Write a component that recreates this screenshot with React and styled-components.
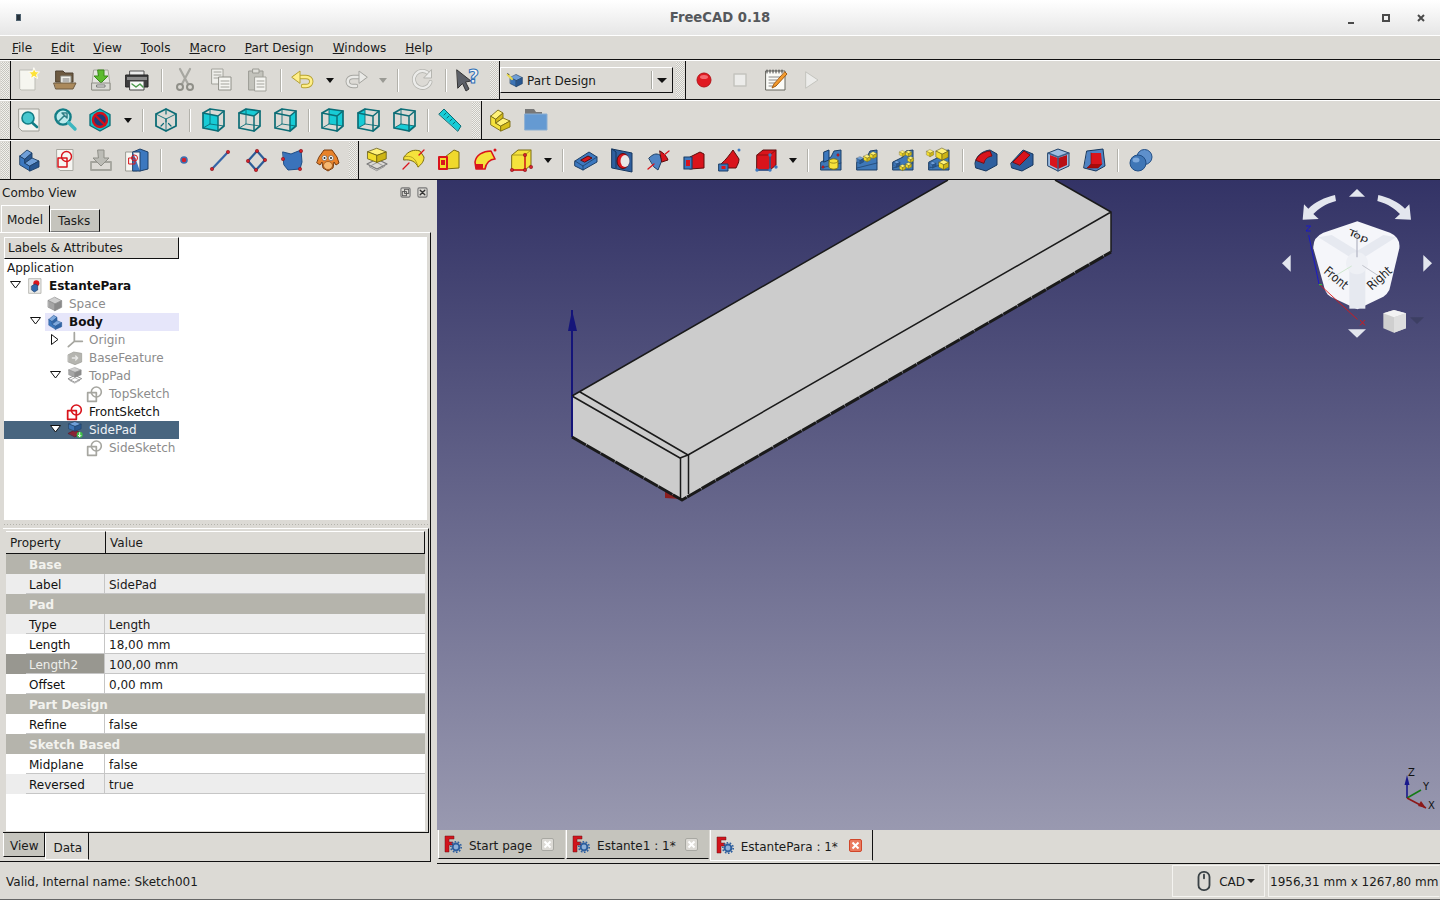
import React from 'react';
import styled, { createGlobalStyle } from 'styled-components';

const GlobalStyle = createGlobalStyle`
  html, body {
    margin: 0;
    height: 100%;
    overflow: hidden;
    background: #dcdad5;
  }
  body {
    font-family: "DejaVu Sans", sans-serif;
    font-size: 12px;
    color: #1a1a1a;
  }
`;

const P = ({ d, f = 'none', s = 'none', w = 1 }) => (
  <path d={d} fill={f} stroke={s} strokeWidth={w} strokeLinejoin="round" strokeLinecap="round" />
);

// iso cube, drawn in a 24 box and moved about with transform
const Cube = ({ t = '', top, left, right, line = '#1d3f66', w = 1 }) => (
  <g transform={t}>
    <P d="M12 2 22 7 12 12 2 7Z" f={top} s={line} w={w} />
    <P d="M2 7 12 12V22L2 17Z" f={left} s={line} w={w} />
    <P d="M12 12 22 7V17L12 22Z" f={right} s={line} w={w} />
  </g>
);

const BLUE = { top: '#6f9fd8', left: '#3d74b5', right: '#28568f' };
const YEL = { top: '#fff27a', left: '#f2dc2c', right: '#cdb414', line: '#6b5f10' };
const GREY = { top: '#cfcfcf', left: '#a5a5a5', right: '#8a8a8a', line: '#8a8a8a' };

// the stepped block that stands for a body or a part
const Step = ({ top, left, right, line }) => (
  <>
    <P d="M3 8 8 11V15L13 18V23L3 17Z" f={left} s={line} w=".9" />
    <P d="M3 8 10 2 15 5 8 11Z" f={top} s={line} w=".9" />
    <P d="M8 11 15 5V10L8 15Z" f={right} s={line} w=".9" />
    <P d="M8 15 15 10 22 13 13 18Z" f={top} s={line} w=".9" />
    <P d="M13 18 22 13V19L13 23Z" f={right} s={line} w=".9" />
  </>
);

const Dots = ({ pts, r = 1.7 }) => pts.map(([x, y]) => (
  <circle key={`${x}-${y}`} cx={x} cy={y} r={r} fill="#d3202a" stroke="#7d1016" strokeWidth=".5" />
));

const Page = () => <P d="M4 1.5H20V22.5H7L4 19.5Z" f="#f6f6f2" s="#a9a9a2" />;

const VIEW_FACES = {
  front: 'M2 5 17 8V23L2 20Z',
  top: 'M2 5 9 1 23 3 17 8Z',
  right: 'M17 8 23 3V18L17 23Z',
  rear: 'M9 1 23 3V18L9 16Z',
  left: 'M2 5 9 1V16L2 20Z',
  bottom: 'M2 20 17 23 23 18 9 16Z',
};

const ViewCube = ({ face }) => (
  <>
    <P d={VIEW_FACES[face]} f="#17ccd6" />
    <P d="M2 5 9 1 23 3V18L17 23 2 20Z" s="#0c6d76" w="1.7" />
    <P d="M2 5 17 8V23M17 8 23 3" s="#0c6d76" w="1.5" />
    <P d="M9 1V16L2 20M9 16 23 18" s="#0c6d76" w=".9" />
  </>
);

const PadBase = () => (
  <>
    <P d="M2 16 12 11 22 16 12 21Z" s="#777" w="1.2" />
    <P d="M4.5 18.5 12 14.5 19.5 18.5 12 22.5Z" s="#999" w="1" />
  </>
);

const Patterned = ({ children }) => (
  <>
    <P d="M2 14 12 9 15 3 22 2V22H2Z" f="#3e78b8" s="#1d3f66" />
    <P d="M2 20 22 15" s="#1d3f66" w=".7" />
    {children}
  </>
);

const ICONS = {
  new: <><P d="M3 2H18V22H4L3 21Z" f="#f6f6f0" s="#bdbdb6" /><P d="M17 0 18.6 3.7 22.5 4 19.6 6.7 20.6 10.5 17 8.4 13.5 10.5 14.4 6.7 11.5 4 15.4 3.7Z" f="#fde23a" s="#fff" w="1" /></>,
  open: <><P d="M3 3H10L12 5H20V14H3Z" f="#6d5a41" s="#4e4030" /><P d="M8 8H18V16H8Z" f="#f2f2ec" s="#8b8b83" /><P d="M10 11H16M10 13H16" s="#777" /><P d="M1 15H23L20 21H3Z" f="#ab8a5c" s="#6d5a41" /></>,
  save: <><P d="M5 2H19L21 16V22H3V16Z" f="#e4e4e0" s="#a6a69e" /><P d="M9 2H15V8H19L12 15 5 8H9Z" f="#5dbb2f" s="#3a8a1a" /><P d="M3 15H21V22H3Z" f="#dadad5" s="#8e8e86" /><P d="M8 17H16V19H8Z" f="#f6f6f2" s="#777" /></>,
  print: <><P d="M5 3H19V8H5Z" f="#ececec" s="#555" /><P d="M1 7H23V19H1Z" f="#3e3e3e" s="#222" /><P d="M2 9H22V12H2Z" f="#8a8a8a" /><P d="M5 13H19V22H5Z" f="#fafafa" s="#444" /><P d="M7 16 11 19 15 16 18 19" s="#4c9a4c" w="1.5" /></>,
  cut: <><P d="M7 1 15 16M17 1 9 16" s="#a7a7a1" w="2.2" /><circle cx="7" cy="19" r="3" fill="none" stroke="#8f8f88" strokeWidth="2" /><circle cx="17" cy="19" r="3" fill="none" stroke="#8f8f88" strokeWidth="2" /></>,
  copy: <><P d="M3 1H14V16H3Z" f="#efefeb" s="#a2a29b" /><P d="M5 4H12M5 7H12M5 10H12" s="#a2a29b" /><P d="M10 9H22V22H10Z" f="#f6f6f2" s="#8f8f88" /><P d="M12 13H20M12 16H20M12 19H20" s="#a2a29b" /></>,
  paste: <><P d="M4 3H18V22H4Z" f="#c3c3bc" s="#9a9a93" /><P d="M8 1H14V5H8Z" f="#dfdfda" s="#9a9a93" /><P d="M10 9H21V23H10Z" f="#f4f4f0" s="#a2a29b" /><P d="M12 13H19M12 16H19M12 19H19" s="#a2a29b" /></>,
  undo: <><P d="M4 9H15C22 9 22 18 15 18H12" s="#b6a232" w="4.4" /><P d="M4 9H15C22 9 22 18 15 18H12" s="#ffef88" w="2.6" /><P d="M1 9 9 3V15Z" f="#ffef88" s="#b6a232" /></>,
  redo: <><P d="M20 9H9C2 9 2 18 9 18H12" s="#a5a5a0" w="4.4" /><P d="M20 9H9C2 9 2 18 9 18H12" s="#e9e9e6" w="2.6" /><P d="M23 9 15 3V15Z" f="#e9e9e6" s="#a5a5a0" /></>,
  reload: <><P d="M19 6A8.5 8.5 0 1 0 20.5 14" s="#b5b5b0" w="4" /><P d="M19 6A8.5 8.5 0 1 0 20.5 14" s="#ececea" w="2.4" /><P d="M21.5 2V10H14Z" f="#ececea" s="#b5b5b0" /></>,
  whats: <><P d="M1 2 15 13 9.5 14 13 21 10 23 6.5 15.5 2 20Z" f="#5c6068" s="#333" /><text x="12" y="15" fontSize="19" fontWeight="700" fontFamily="DejaVu Sans" fill="#f4f4f4" stroke="#2e6fb5" strokeWidth="1">?</text></>,
  combo: <><Cube {...BLUE} t="translate(3 2) scale(.85)" /><P d="M1 4 7 10" s="#e8d84c" w="3" /><P d="M1 2 3 4" s="#444" w="1.4" /></>,
  rec: <><circle cx="12" cy="12" r="7" fill="#e01a22" stroke="#b4141a" /><ellipse cx="12" cy="9" rx="4" ry="2" fill="#f46a70" /></>,
  stop: <><P d="M6 6H18V18H6Z" f="#ececea" s="#c4c4be" w="1.5" /></>,
  macro: <><P d="M2 3H21V22H2Z" f="#fbfbf7" s="#66665f" /><P d="M3 2V5M6 2V5M9 2V5M12 2V5M15 2V5M18 2V5" s="#444" /><P d="M5 9H16M5 12H13M5 15H11M5 18H11" s="#888" /><P d="M21 4 23 6 12 18 8 20 10 16Z" f="#f39a2c" s="#a25a10" /></>,
  play: <><P d="M6 4 18 12 6 20Z" f="#ececea" s="#c4c4be" /></>,
  fitAll: <><P d="M2 1H22V23H5L2 20Z" f="#f4f4f0" s="#9e9e97" /><circle cx="11" cy="10" r="6" fill="#49c7cf" stroke="#127d86" strokeWidth="1.6" /><P d="M15.5 15 20 19" s="#127d86" w="2.6" /></>,
  fitSel: <><circle cx="10" cy="9" r="7.6" fill="#bdeaec" stroke="#127d86" strokeWidth="2.4" /><P d="M5 14 12 7M9 5H14V10Z" f="#fff" s="#2f7f86" w="1.5" /><P d="M15.5 14.5 22 21" s="#3cb6bf" w="3.4" /></>,
  style: <><P d="M11 1 21 6.5V17.5L11 23 1 17.5V6.5Z" f="#18bdc6" s="#0c6d76" w="1.3" /><circle cx="11" cy="12" r="7" fill="#1d3e78" stroke="#d3101a" strokeWidth="2.4" /><P d="M6 7 16 17" s="#d3101a" w="2.4" /></>,
  iso: <><P d="M12 1 22 6V18L12 23 2 18V6Z" s="#0c6d76" w="1.8" /><P d="M2 6 12 11 22 6M12 11V23" s="#0c6d76" w=".9" /><P d="M12 1V6M7 18 9.5 15.5M17 18 14.5 15.5M12 11V14" s="#0c6d76" w="1.2" /></>,
  front: <ViewCube face="front" />,
  top: <ViewCube face="top" />,
  right: <ViewCube face="right" />,
  rear: <ViewCube face="rear" />,
  leftV: <ViewCube face="left" />,
  bottom: <ViewCube face="bottom" />,
  measure: <><P d="M1 6 6 1 23 18 20 23Z" f="#17ccd6" s="#0c6d76" /><P d="M6 7 8 5M9 10 11 8M12 13 14 11M15 16 17 14" s="#0c6d76" /></>,
  part: <Step top="#fff27a" left="#f5e23c" right="#d6bd18" line="#7a6c12" />,
  folder: <><P d="M1 1H10L12 4H18V9H1Z" f="#777" /><P d="M1 6H23V22H1Z" f="#659ad2" s="#8baed2" /></>,
  body: <Step top="#6f9fd8" left="#3c78bf" right="#28568f" line="#1d3f66" />,
  sketch: <><Page /><P d="M5 10H14V19H5Z" s="#d9141c" w="1.5" /><circle cx="13.5" cy="8.5" r="5" fill="none" stroke="#d9141c" strokeWidth="1.4" /></>,
  binder: <><P d="M2 14H22V22H2Z" s="#a4a49d" w="1.8" /><P d="M9 2H15V10H20L12 18 4 10H9Z" f="#bcbcb6" s="#8e8e87" /></>,
  clone: <><P d="M1 4H12V23H1Z" f="#f6f6f2" s="#9c9c95" /><P d="M8 4 15 1 23 4V21L15 23H8Z" f="#3c78bf" s="#1d3f66" /><P d="M8 4H15V23" f="#f0f0f0" s="#1d3f66" /><P d="M4 10H10V16H4Z" s="#d9141c" /><circle cx="9.5" cy="10" r="3" fill="none" stroke="#d9141c" /></>,
  point: <circle cx="12" cy="12" r="3" fill="#d3202a" stroke="#3d6fb0" strokeWidth="1.6" />,
  line: <><P d="M4 21 20 4" s="#3565a8" w="2.2" /><Dots pts={[[4, 21], [20, 4]]} /></>,
  plane: <><P d="M4 13 13 3 21 12 12 22Z" s="#2c5c98" w="2.2" /><Dots pts={[[4, 13], [13, 3], [21, 12], [12, 22]]} /></>,
  shape: <><P d="M3 4 11 6 21 2 22 14 20 21 8 22 4 17Z" f="#3a73bb" s="#204e86" /><Dots pts={[[21, 3], [3, 11], [20, 21]]} /></>,
  monkey: <><P d="M3 9 8 2H16L21 9 23 15 20 17 18 14 17 20 12 23 7 20 6 14 4 17 1 15Z" f="#e8822a" s="#7a3c0e" /><ellipse cx="12" cy="17.5" rx="4.5" ry="4" fill="#f7b870" stroke="#7a3c0e" strokeWidth=".6" /><circle cx="8.5" cy="10" r="2.5" fill="#fff" stroke="#555" strokeWidth=".6" /><circle cx="15" cy="10" r="2.5" fill="#fff" stroke="#555" strokeWidth=".6" /><circle cx="15" cy="10" r="1" fill="#222" /><circle cx="8.5" cy="10" r="1" fill="#222" /></>,
  pad: <><PadBase /><Cube {...YEL} t="translate(1 -1) scale(.92 .7)" /></>,
  revolve: <><P d="M3 9C7 3 13 1 19 3L23 9C23 13 21 16 17 19 15 14 10 11 3 12Z" f="#f5e23c" s="#7a6c12" /><P d="M3 9C9 7 15 9 17 19" s="#a8961a" w=".8" /><P d="M2 21 8 15M18 7 23 2" s="#d9141c" w="1.3" /></>,
  loft: <><P d="M8 9 17 2 22 4V20L8 21Z" f="#f0d92c" s="#7a6c12" /><P d="M2 9H10V21H2Z" f="#f2dc2c" s="#d9141c" w="2" /><P d="M4 12H8V17H4Z" f="#d9141c" /></>,
  pipe: <><P d="M2 14C3 7 10 3 18 3L22 11C17 11 13 15 12 21H3Z" f="#f5e23c" s="#d9141c" w="1.6" /><P d="M3 21H10V16H3Z" f="#d9141c" /><circle cx="22" cy="2" r="1.5" fill="#d9141c" /></>,
  prim: <><P d="M3 7 9 2H22V17L16 22H3Z" f="#f5e23c" s="#7a6c12" /><P d="M3 7H16V22M16 7 22 2" s="#9a8a16" w=".8" /><P d="M3 22H16V7" s="#d9141c" w="1.4" /><Dots pts={[[16, 7], [3, 22], [16, 22], [22, 19]]} /></>,
  pocket: <><P d="M1 13 15 4 23 9V14L9 22 1 18Z" f="#3c78bf" s="#1d3f66" /><P d="M7 12 14 8 18 10 11 14Z" f="#d9141c" s="#5c0c0c" /><P d="M1 13 9 18V22M9 18 23 9" s="#1d3f66" w=".8" /></>,
  hole: <><P d="M2 1 22 5V24L2 20Z" f="#2e5f9e" s="#16375e" /><P d="M2 1 6 4V20" s="#16375e" /><ellipse cx="13" cy="13" rx="6" ry="7.5" fill="#d9141c" stroke="#5c0c0c" /><ellipse cx="15" cy="13" rx="4.5" ry="6" fill="#e8e8e8" /></>,
  groove: <><P d="M3 10C7 6 10 5 14 7L16 12 12 22 8 19Z" f="#4f83c3" s="#1d3f66" /><P d="M14 3C18 5 21 9 22 12L16 14Z" f="#d9141c" s="#5c0c0c" /><P d="M2 21 8 16M18 7 23 3" s="#d9141c" w="1.3" /></>,
  subLoft: <><P d="M8 9 18 4 22 6V20L8 21Z" f="#d9141c" s="#5c0c0c" /><P d="M2 9H10V21H2Z" f="#3c78bf" s="#1d3f66" w="1.2" /><P d="M4 12H8V18H4Z" f="#d9141c" /></>,
  subPipe: <><P d="M3 16C8 12 12 6 15 2L21 11C21 14 20 16 18 20H9Z" f="#d9141c" s="#5c0c0c" /><P d="M1 16H10V23H1Z" f="#3c78bf" s="#1d3f66" /><P d="M3.5 18H7.5V21H3.5Z" f="#d9141c" /><circle cx="21" cy="2" r="1.5" fill="#3c78bf" /></>,
  subPrim: <><P d="M3 7 9 2H22V17L16 22H3Z" f="#d9141c" s="#5c0c0c" /><P d="M3 7H16V22M16 7 22 2" s="#7e0c0c" w=".8" /><P d="M3 22H16V7" s="#2c5c98" w="1.4" /><circle cx="16" cy="7" r="1.7" fill="#3c78bf" /><circle cx="3" cy="22" r="1.7" fill="#3c78bf" /><circle cx="16" cy="22" r="1.7" fill="#3c78bf" /><circle cx="22" cy="19" r="1.7" fill="#3c78bf" /></>,
  mirror: <Patterned><P d="M5 4 10 2V12L5 14Z" f="#3c78bf" s="#173a63" /><P d="M10 13C10 10 19 10 19 13V19C19 22 10 22 10 19Z" f="#f5e23c" s="#7a6c12" /><P d="M10 13C10 16 19 16 19 13" s="#7a6c12" w=".7" /><Dots pts={[[4, 19], [19, 7]]} r={1.2} /></Patterned>,
  linPat: <Patterned><Cube {...BLUE} t="translate(1 8) scale(.35)" /><Cube {...YEL} t="translate(8 6) scale(.35)" /><Cube {...YEL} t="translate(14 3) scale(.35)" /></Patterned>,
  polPat: <Patterned><Cube {...BLUE} t="translate(2 12) scale(.32)" /><Cube {...YEL} t="translate(8 2) scale(.3)" /><Cube {...YEL} t="translate(14 2) scale(.3)" /><Cube {...YEL} t="translate(16 8) scale(.3)" /><Cube {...YEL} t="translate(14 14) scale(.3)" /><Cube {...YEL} t="translate(8 16) scale(.3)" /></Patterned>,
  scaled: <Patterned><Cube {...BLUE} t="translate(2 13) scale(.32)" /><Cube {...YEL} t="translate(-1 1) scale(.35)" /><Cube {...YEL} t="translate(8 -1) scale(.6)" /><Cube {...YEL} t="translate(11 11) scale(.48)" /></Patterned>,
  fillet: <><P d="M1 15C2 8 8 3 16 2L23 6V17L12 23 2 20Z" f="#2e5f9e" s="#16375e" /><P d="M2 12C4 7 9 4 16 3L18 8C13 9 11 11 10 15Z" f="#d9141c" s="#7e0c0c" /></>,
  chamfer: <><P d="M1 15 13 2 23 6V17L12 23 2 20Z" f="#2e5f9e" s="#16375e" /><P d="M3 14 14 3 20 7 10 17Z" f="#d9141c" s="#7e0c0c" /></>,
  draft: <><P d="M2 5 12 1 23 5V18L12 23 2 18Z" f="#9ebce0" s="#1d3f66" /><P d="M4 7 12 10V21L4 17Z" f="#d9141c" /><P d="M12 10 21 7V17L12 21Z" f="#b80f15" /><P d="M2 5 12 9 23 5M12 9V23" s="#3c5f88" w="1.4" /></>,
  thick: <><P d="M5 3 21 1 23 18 14 23 2 20Z" f="#4f83c3" s="#16375e" /><P d="M9 5H19L20 16 9 16Z" f="#d9141c" /><P d="M9 16 5 20H16L20 16M9 5V16" f="#a80a0a" s="#7e0c0c" w=".6" /></>,
  bool: <><circle cx="15.5" cy="9" r="7.5" fill="#5e90cc" stroke="#214e85" /><circle cx="9" cy="15" r="8" fill="#3f76b6" stroke="#214e85" /><ellipse cx="7" cy="12" rx="3.5" ry="2.5" fill="#7ca8dc" /></>,
  doc: <><P d="M3 1H21V23H3Z" f="#ececea" s="#a0a09a" /><circle cx="14" cy="8" r="4.5" fill="#d9141c" /><P d="M7 12 12 9 16 11V18L11 21 7 18Z" f="#2f67ad" s="#173a63" /></>,
  space: <Cube {...GREY} t="translate(0 0)" />,
  bodyT: <Step top="#7fa8dc" left="#3c78bf" right="#2f64a6" line="#2c5c98" />,
  origin: <><P d="M11 1V14L2 22M11 14 23 14" s="#a6a6a0" w="2.6" /></>,
  base: <><P d="M2 7 10 3 22 5V18L12 22 2 18Z" f="#b5b5b0" s="#9a9a94" /><P d="M8 12H16L13 9M16 12 13 15" s="#e8e8e6" w="2" /></>,
  topPad: <><PadBase /><Cube {...GREY} t="translate(1 -2) scale(.92 .72)" /></>,
  sketchG: <><P d="M1 10H14V23H1Z" s="#a6a6a0" w="2.6" /><circle cx="14" cy="9" r="7.5" fill="none" stroke="#a6a6a0" strokeWidth="2.4" /></>,
  sketchR: <><P d="M1 10H14V23H1Z" s="#d9141c" w="2.6" /><circle cx="14" cy="9" r="7.5" fill="none" stroke="#d9141c" strokeWidth="2.4" /></>,
  sidePad: <><P d="M2 17 12 12 22 17 12 22Z" f="#8a2535" s="#5c1622" /><Cube {...BLUE} t="translate(1 -2) scale(.92 .72)" /><circle cx="19" cy="19" r="4.5" fill="#3ec04a" /><P d="M19 16V22M17 20 19 22 21 20" s="#fff" w="1.4" /></>,
  mouse: <><rect x="6" y="2" width="12" height="20" rx="5.5" fill="none" stroke="#3a4246" strokeWidth="2" /><P d="M12 5V9" s="#3a4246" w="2" /></>,
  floatWin: <><rect x="2" y="2" width="20" height="20" rx="3" fill="none" stroke="#777" strokeWidth="2.4" /><rect x="10" y="5" width="9" height="9" fill="none" stroke="#555" strokeWidth="2" /><rect x="5" y="10" width="9" height="9" fill="none" stroke="#555" strokeWidth="2" /></>,
  closeWin: <><rect x="2" y="2" width="20" height="20" rx="3" fill="none" stroke="#777" strokeWidth="2.4" /><P d="M7 7 17 17M17 7 7 17" s="#333" w="3" /></>,
};

const Svg = styled.svg`
  display: block;
  flex: none;
`;

const Icon = ({ name, size = 24 }) => (
  <Svg width={size} height={size} viewBox="0 0 24 24" overflow="visible">{ICONS[name]}</Svg>
);

const Window = styled.div`
  width: 1440px;
  height: 900px;
  display: flex;
  flex-direction: column;
  background: #dcdad5;
  overflow: hidden;
`;

const TitleBar = styled.header`
  height: 36px;
  flex: none;
  box-sizing: border-box;
  border-bottom: 1px solid #fff;
  background: linear-gradient(#ffffff, #e6e6e6);
  display: grid;
  grid-template-columns: 1fr auto 1fr;
  align-items: center;
  color: #55585c;
`;

const AppMark = styled.span`
  display: block;
  width: 3px;
  height: 5px;
  margin: 0 0 1px 16px;
  border: 1px solid #4f6270;
  background: #27323a;
`;

const Title = styled.h1`
  margin: 0;
  font-size: 13.2px;
  font-weight: 700;
`;

const WinButtons = styled.div`
  justify-self: end;
  display: flex;
  margin-right: 2px;
`;

const WinButton = styled.span`
  width: 35px;
  height: 12px;
  display: flex;
  justify-content: center;
  align-items: ${p => (p.$low ? 'flex-end' : 'center')};
`;

const MenuBar = styled.nav`
  height: 24px;
  flex: none;
  box-sizing: border-box;
  border-bottom: 1px solid #111;
  display: flex;
  align-items: center;
  gap: 19px;
  padding: 1px 0 0 12px;
`;

const MenuItem = styled.span`
  white-space: nowrap;
  &::first-letter { text-decoration: underline; }
`;

const ToolRow = styled.div`
  height: 40px;
  flex: none;
  box-sizing: border-box;
  border-top: 1px solid #fff;
  border-bottom: 1px solid #111;
  display: flex;
  align-items: stretch;
`;

const Grip = styled.span`
  width: 10px;
  flex: none;
  margin-left: ${p => p.$gap || 0}px;
  border-right: 1px solid #111;
  background: repeating-conic-gradient(#c6c5bf 0 25%, #f1f0ec 0 50%) 0 0 / 2px 2px;
  box-shadow: inset 0 0 0 1px #dcdad5;
`;

const ToolButton = styled.span`
  width: 36px;
  flex: none;
  display: flex;
  align-items: center;
  justify-content: center;
`;

const Caret = styled.span`
  width: ${p => p.$w || 17}px;
  flex: none;
  display: flex;
  align-items: center;
  justify-content: center;
  &::after {
    content: '';
    border: 4.5px solid transparent;
    border-bottom: 0;
    border-top: 5px solid ${p => (p.$off ? '#9a9a94' : '#111')};
  }
`;

const Sep = styled.span`
  width: ${p => p.$w || 12}px;
  flex: none;
  display: flex;
  align-items: center;
  justify-content: center;
  &::after {
    content: '';
    width: 1px;
    height: 23px;
    background: #b3b2ab;
    box-shadow: 1px 0 0 #fff;
  }
`;

const Combo = styled.div`
  width: 173px;
  height: 26px;
  flex: none;
  margin: 6px 2px 0 0;
  box-sizing: border-box;
  border-top: 1px solid #fff;
  border-left: 1px solid #fff;
  border-right: 1px solid #111;
  border-bottom: 1px solid #111;
  display: flex;
  align-items: center;
  gap: 3px;
  padding-left: 6px;
`;

const ComboText = styled.span`
  flex: 1;
  padding-top: 2px;
`;

const ComboArrow = styled.span`
  width: 20px;
  height: 18px;
  border-left: 1px solid #a8a8a1;
  box-shadow: inset 1px 0 0 #fff;
  display: flex;
  align-items: center;
  justify-content: center;
  &::after {
    content: '';
    border: 5px solid transparent;
    border-bottom: 0;
    border-top: 5px solid #111;
  }
`;

const Main = styled.main`
  height: 684px;
  flex: none;
  display: flex;
`;

const Dock = styled.aside`
  width: 431px;
  flex: none;
  display: flex;
  flex-direction: column;
  height: 682px;
`;

const DockTitle = styled.div`
  height: 24px;
  flex: none;
  display: flex;
  align-items: center;
  gap: 6px;
  padding: 0 3px 0 2px;
`;

const DockName = styled.span`
  flex: 1;
  padding-top: 2px;
`;

const TopTabs = styled.div`
  height: 28px;
  flex: none;
  display: flex;
  align-items: flex-end;
  padding-left: 1px;
`;

const TopTab = styled.div`
  box-sizing: border-box;
  height: ${p => (p.$active ? 27 : 23)}px;
  padding: ${p => (p.$active ? '7px 6px 0 5px' : '4px 7px 0 7px')};
  min-width: ${p => (p.$active ? 0 : 50)}px;
  background: ${p => (p.$active ? '#dcdad5' : '#c5c4bd')};
  border-top: 1px solid #fff;
  border-left: 1px solid #fff;
  border-right: 1px solid #111;
  border-bottom: ${p => (p.$active ? 0 : '1px solid #777')};
`;

const Pane = styled.div`
  flex: 1;
  min-height: 0;
  box-sizing: border-box;
  border-top: 1px solid #fff;
  border-right: 1px solid #111;
  border-bottom: 1px solid #111;
  padding: 4px 1px 0 3px;
  display: flex;
  flex-direction: column;
`;

const TreeBox = styled.div`
  height: 283px;
  flex: none;
  margin: 0 2px 0 1px;
  background: #fff;
`;

const TreeHead = styled.div`
  width: 175px;
  height: 22px;
  box-sizing: border-box;
  padding: 3px 0 0 3px;
  background: #dcdad5;
  border-top: 1px solid #fff;
  border-left: 1px solid #fff;
  border-right: 1px solid #111;
  border-bottom: 1px solid #111;
`;

const TreeRow = styled.div`
  width: 175px;
  height: 18px;
  box-sizing: border-box;
  display: flex;
  align-items: center;
  padding-left: ${p => 1 + p.$depth * 20}px;
  background: ${p => (p.$selected ? '#48657f' : 'transparent')};
`;

const TreeRoot = styled.div`
  height: 18px;
  line-height: 18px;
  padding-left: 3px;
`;

const Twisty = styled.span`
  width: 20px;
  height: 18px;
  flex: none;
  display: flex;
  align-items: center;
  justify-content: center;
  padding-bottom: 2px;
  box-sizing: border-box;
`;

const TreeCell = styled.div`
  flex: 1;
  height: 18px;
  line-height: 18px;
  display: flex;
  align-items: center;
  gap: 6px;
  padding-left: 2px;
  white-space: nowrap;
  background: ${p => (p.$current ? '#e6e6fa' : 'transparent')};
  font-weight: ${p => (p.$bold ? 700 : 400)};
  color: ${p => (p.$dim ? '#8c8c8c' : p.$selected ? '#eef2f6' : '#111')};
`;

const Splitter = styled.div`
  height: 8px;
  flex: none;
  background: radial-gradient(circle, #b5b4ad 0.6px, transparent 0.8px) 0 center / 3px 3px repeat-x;
`;

const PropFrame = styled.div`
  height: 305px;
  flex: none;
  box-sizing: border-box;
  padding: 2px 3px 0 3px;
  border-top: 1px solid #fff;
  border-right: 1px solid #111;
  border-bottom: 1px solid #111;
`;

const PropTable = styled.div`
  height: 300px;
  background: #fff;
`;

const PropHead = styled.div`
  display: grid;
  grid-template-columns: 100px 1fr;
  height: 23px;
  box-sizing: border-box;
  background: #dcdad5;
  border-bottom: 1px solid #111;
`;

const HeadCell = styled.div`
  padding: 4px 0 0 4px;
  border-top: 1px solid #fff;
  border-right: 1px solid #111;
`;

const GroupRow = styled.div`
  height: 20px;
  box-sizing: border-box;
  padding: 1px 0 0 23px;
  background: #b5b4ac;
  color: #f2f2ee;
  font-weight: 700;
  line-height: 20px;
  overflow: hidden;
`;

const PropRow = styled.div`
  display: grid;
  grid-template-columns: 20px 79px 1fr;
  grid-template-rows: 20px;
  height: 20px;
  background: ${p => (p.$alt ? '#ededed' : '#fff')};
`;

const PropGutter = styled.div`
  background: ${p => (p.$active ? '#989790' : 'transparent')};
`;

const PropName = styled.div`
  box-sizing: border-box;
  padding: 3px 0 0 3px;
  line-height: 16px;
  border-bottom: 1px solid #c6c6c6;
  border-right: 1px solid #c6c6c6;
  background: ${p => (p.$active ? '#989790' : 'transparent')};
  color: ${p => (p.$active ? '#eeeeea' : '#111')};
`;

const PropValue = styled.div`
  box-sizing: border-box;
  padding: 3px 0 0 4px;
  line-height: 16px;
  border-bottom: 1px solid #c6c6c6;
`;

const BottomTabs = styled.div`
  display: flex;
  align-items: flex-start;
`;

const BottomTab = styled.div`
  box-sizing: border-box;
  height: ${p => (p.$active ? 27 : 24)}px;
  padding: ${p => (p.$active ? '8px 6px 0 7px' : '6px 6px 0')};
  background: ${p => (p.$active ? '#dcdad5' : '#c5c4bd')};
  border-left: 1px solid #fff;
  border-right: 1px solid #111;
  border-bottom: 1px solid ${p => (p.$active ? '#fff' : '#111')};
`;

const Center = styled.section`
  flex: 1;
  min-width: 0;
  margin-left: 6px;
  display: flex;
  flex-direction: column;
`;

const Viewport = styled.div`
  height: 650px;
  flex: none;
  position: relative;
  overflow: hidden;
  background: linear-gradient(#333366, #9999b0);
`;

const Scene = styled.svg`
  position: absolute;
  left: 0;
  top: 0;
`;

const NavCube = styled.svg`
  position: absolute;
  right: 0;
  top: 0;
`;

const AxisCross = styled.svg`
  position: absolute;
  right: 0;
  bottom: 14px;
`;

const DocTabs = styled.div`
  height: 34px;
  flex: none;
  box-sizing: border-box;
  border-bottom: 1px solid #111;
  display: flex;
  align-items: flex-start;
  padding-left: 1px;
`;

const DocTab = styled.div`
  height: ${p => (p.$active ? 31 : 29)}px;
  box-sizing: border-box;
  display: flex;
  align-items: center;
  gap: 7px;
  padding: 0 10px 0 5px;
  margin-right: 1px;
  white-space: nowrap;
  background: ${p => (p.$active ? '#dcdad5' : '#c5c4bd')};
  border-left: 1px solid #fff;
  border-right: 1px solid ${p => (p.$active ? '#111' : '#c5c4bd')};
  border-bottom: 1px solid ${p => (p.$active ? '#fff' : '#111')};
`;

const DocLabel = styled.span`
  margin-right: ${p => (p.$active ? 4 : 2)}px;
  padding-top: 3px;
`;

const CloseBox = styled.span`
  width: 11px;
  height: 11px;
  flex: none;
  display: flex;
  align-items: center;
  justify-content: center;
  border: 1px solid ${p => (p.$active ? '#d0462a' : '#a8a8a2')};
  border-radius: 2px;
  background: ${p => (p.$active ? '#ea7a5e' : '#dcdad5')};
`;

const StatusBar = styled.footer`
  height: 36px;
  flex: none;
  box-sizing: border-box;
  border-bottom: 1px solid #666;
  display: flex;
  align-items: center;
  padding: 0 0 1px 6px;
`;

const StatusText = styled.span`
  flex: 1;
  padding-top: 2px;
`;

const StatusCell = styled.div`
  height: 32px;
  box-sizing: border-box;
  display: flex;
  align-items: center;
  justify-content: ${p => (p.$nav ? 'flex-end' : 'flex-start')};
  gap: 4px;
  width: ${p => (p.$nav ? 93 : 172)}px;
  margin-left: ${p => (p.$nav ? 0 : 3)}px;
  padding: ${p => (p.$nav ? '0 9px 0 0' : '2px 0 0 1px')};
  border: 1px solid #f4f3f0;
  border-right-color: ${p => (p.$nav ? '#f4f3f0' : 'transparent')};
  white-space: nowrap;
`;

const CadLabel = styled.span`
  padding-top: 2px;
`;

const SmallCaret = styled.span`
  margin-left: -2px;
  border: 4px solid transparent;
  border-bottom: 0;
  border-top: 4px solid #222;
`;

const ButtonRun = ({ names }) => names.map(n => (
  <ToolButton key={n}><Icon name={n} /></ToolButton>
));

const TreeItem = ({ depth, icon, label, open, closed, dim, bold, current, selected }) => (
  <TreeRow $depth={depth} $selected={selected}>
    <Twisty>
      {open && (
        <svg width="11" height="8" viewBox="0 0 11 8"><path d="M.5.5h10L5.5 7z" fill="#fff" stroke="#111" /></svg>
      )}
      {closed && (
        <svg width="8" height="11" viewBox="0 0 8 11"><path d="M.5.5v10L7 5.5z" fill="#fff" stroke="#111" /></svg>
      )}
    </Twisty>
    <TreeCell $dim={dim} $bold={bold} $current={current} $selected={selected}>
      <Icon name={icon} size={16} />
      {label}
    </TreeCell>
  </TreeRow>
);

const Logo = () => (
  <svg width="18" height="18" viewBox="0 0 18 18">
    <path d="M1 1h9v3H5v3h4v3H5v7H1z" fill="#d2141c" stroke="#6b1014" strokeWidth=".5" />
    <circle cx="12" cy="12" r="3.4" fill="#8fb0d8" stroke="#2f5f9e" strokeWidth="2" />
    <circle cx="12" cy="12" r="5.2" fill="none" stroke="#2f5f9e" strokeWidth="1.6" strokeDasharray="1.6 1.6" />
  </svg>
);

const Close = ({ active }) => (
  <CloseBox $active={active}>
    <svg width="9" height="9" viewBox="0 0 9 9"><path d="M1.5 1.5l6 6M7.5 1.5l-6 6" stroke="#fff" strokeWidth="2" /></svg>
  </CloseBox>
);

const PROPS = [
  { group: 'Base' },
  { name: 'Label', value: 'SidePad', alt: true },
  { group: 'Pad' },
  { name: 'Type', value: 'Length', alt: true },
  { name: 'Length', value: '18,00 mm' },
  { name: 'Length2', value: '100,00 mm', alt: true, active: true },
  { name: 'Offset', value: '0,00 mm' },
  { group: 'Part Design' },
  { name: 'Refine', value: 'false' },
  { group: 'Sketch Based' },
  { name: 'Midplane', value: 'false' },
  { name: 'Reversed', value: 'true', alt: true },
];

const BoxScene = () => (
  <Scene width="1003" height="650" viewBox="437 180 1003 650">
    <path d="M572 396 948 180H1055L1111 212V252L682 500 572 437Z" fill="#cccccc" />
    <path d="M572 310V437" stroke="#15157a" strokeWidth="2" />
    <path d="M572 310 568 331H577Z" fill="#15157a" />
    <path d="M665 491 681 499 665 498Z" fill="#8c1f1f" />
    <g fill="none" stroke="#1a1a1a" strokeLinejoin="round">
      <path d="M572 396 948 180M1055 180 1111 212V252M580 392 688 455 1111 212M572 396 680 458 688 455" strokeWidth="1.5" />
      <path d="M680.5 458V498M688.5 455V494" strokeWidth="1.5" />
      <path d="M572 396V437" stroke="#15157a" strokeWidth="1.5" />
      <path d="M572 437 682 500 1111 252" strokeWidth="3" strokeDasharray="16 .6" />
    </g>
  </Scene>
);

const CubeLabel = styled.text`
  font-family: "DejaVu Sans", sans-serif;
  font-size: 38px;
  fill: #222;
  text-anchor: middle;
`;

const NavigationCube = () => (
  <NavCube width="170" height="170" viewBox="0 0 510 510">
    <g fill="#e3e6ee">
      <path d="M237 50H285L261 27Z" />
      <path d="M234 448H288L261 473Z" />
      <path d="M62 225V275L36 250Z" />
      <path d="M460 225V275L486 250Z" />
      <path d="M195 45 198 63C165 72 145 87 130 102L146 117 98 119 102 73 115 86C135 66 165 52 195 45Z" />
      <path d="M325 45 322 63C355 72 375 87 390 102L374 117 423 119 418 73 405 86C385 66 355 52 325 45Z" />
    </g>
    <path d="M262 124 360 158Q392 172 388 205L358 330Q350 345 340 350L262 388 182 350Q172 345 165 330L130 205Q128 172 160 158Z" fill="#f5f6fa" />
    <path d="M145 172 238 230 262 250 286 230 378 172 340 165 262 212 185 165Z" fill="#e6e9f0" />
    <path d="M238 260H286V386H238Z" fill="#e6e9f0" />
    <circle cx="261" cy="250" r="33" fill="#eef0f5" />
    <path d="M261 150V232" stroke="#b8bac8" strokeWidth="4" />
    <path d="M245 258 175 300" stroke="#cfe8cf" strokeWidth="3" />
    <path d="M277 256 345 300" stroke="#c2c4cc" strokeWidth="3" />
    <CubeLabel transform="translate(262 176) rotate(22) scale(1 .7)">Top</CubeLabel>
    <CubeLabel transform="translate(190 304) rotate(40) scale(.85 1)">Front</CubeLabel>
    <CubeLabel transform="translate(337 304) rotate(-42) scale(.85 1)">Right</CubeLabel>
    <path d="M116 165 147 312" stroke="#1414d8" strokeWidth="2.6" fill="none" />
    <path d="M147 312 262 418" stroke="#e01414" strokeWidth="2.6" fill="none" />
    <path d="M147 314H156" stroke="#2ecc40" strokeWidth="3" />
    <path d="M108 138H122L108 153H122" stroke="#1414d8" strokeWidth="2.6" fill="none" />
    <path d="M270 420 285 436M285 420 270 436" stroke="#e01414" strokeWidth="2.6" />
    <path d="M340 400 372 390 408 400V445L372 458 340 445Z" fill="#cfcfcf" />
    <path d="M340 400 372 390 408 400 372 412Z" fill="#f3f3f3" />
    <path d="M372 412 408 400V445L372 458Z" fill="#dedede" />
    <path d="M420 412H462L441 432Z" fill="#3d3f63" />
  </NavCube>
);

const AxisLetter = styled.text`
  font-family: "DejaVu Sans", sans-serif;
  font-size: 10px;
  fill: #111;
`;

const Axes = () => (
  <AxisCross width="44" height="50" viewBox="1396 766 44 50">
    <path d="M1407 798V781" stroke="#18188c" strokeWidth="1.6" />
    <path d="M1407 775 1404.5 785H1409.5Z" fill="#18188c" />
    <path d="M1407 798 1421 790" stroke="#147a14" strokeWidth="1.6" />
    <path d="M1407 798 1426 808" stroke="#8c1818" strokeWidth="1.6" />
    <path d="M1426 808 1418 806 1421 801Z" fill="#8c1818" />
    <AxisLetter x="1408" y="776">Z</AxisLetter>
    <AxisLetter x="1423" y="790">Y</AxisLetter>
    <AxisLetter x="1428" y="809">X</AxisLetter>
  </AxisCross>
);

const App = () => (
  <Window>
    <GlobalStyle />
    <TitleBar>
      <AppMark />
      <Title>FreeCAD 0.18</Title>
      <WinButtons>
        <WinButton $low><svg width="6" height="2"><rect width="6" height="2" fill="#4a4a4a" /></svg></WinButton>
        <WinButton><svg width="8" height="8"><rect x="1" y="1" width="6" height="6" fill="none" stroke="#4a4a4a" strokeWidth="2" /></svg></WinButton>
        <WinButton><svg width="8" height="8"><path d="M1 1l6 6M7 1L1 7" stroke="#4a4a4a" strokeWidth="2" /></svg></WinButton>
      </WinButtons>
    </TitleBar>

    <MenuBar>
      {['File', 'Edit', 'View', 'Tools', 'Macro', 'Part Design', 'Windows', 'Help'].map(m => (
        <MenuItem key={m}>{m}</MenuItem>
      ))}
    </MenuBar>

    <ToolRow>
      <Grip />
      <ButtonRun names={['new', 'open', 'save', 'print']} />
      <Sep />
      <ButtonRun names={['cut', 'copy', 'paste']} />
      <Sep $w={10} />
      <ButtonRun names={['undo']} />
      <Caret />
      <ButtonRun names={['redo']} />
      <Caret $off />
      <Sep $w={13} />
      <ButtonRun names={['reload']} />
      <Sep $w={10} />
      <ButtonRun names={['whats']} />
      <Grip $gap={3} />
      <Combo>
        <Icon name="combo" size={17} />
        <ComboText>Part Design</ComboText>
        <ComboArrow />
      </Combo>
      <Grip />
      <ButtonRun names={['rec', 'stop', 'macro', 'play']} />
    </ToolRow>

    <ToolRow>
      <Grip />
      <ButtonRun names={['fitAll', 'fitSel', 'style']} />
      <Caret />
      <Sep />
      <ButtonRun names={['iso']} />
      <Sep $w={11} />
      <ButtonRun names={['front', 'top', 'right']} />
      <Sep $w={11} />
      <ButtonRun names={['rear', 'leftV', 'bottom']} />
      <Sep $w={10} />
      <ButtonRun names={['measure']} />
      <Grip $gap={3} />
      <ButtonRun names={['part', 'folder']} />
    </ToolRow>

    <ToolRow>
      <Grip />
      <ButtonRun names={['body', 'sketch', 'binder', 'clone']} />
      <Sep $w={11} />
      <ButtonRun names={['point', 'line', 'plane', 'shape', 'monkey']} />
      <Grip $gap={2} />
      <ButtonRun names={['pad', 'revolve', 'loft', 'pipe', 'prim']} />
      <Caret />
      <Sep />
      <ButtonRun names={['pocket', 'hole', 'groove', 'subLoft', 'subPipe', 'subPrim']} />
      <Caret />
      <Sep />
      <ButtonRun names={['mirror', 'linPat', 'polPat', 'scaled']} />
      <Sep $w={11} />
      <ButtonRun names={['fillet', 'chamfer', 'draft', 'thick']} />
      <Sep $w={11} />
      <ButtonRun names={['bool']} />
    </ToolRow>

    <Main>
      <Dock>
        <DockTitle>
          <DockName>Combo View</DockName>
          <Icon name="floatWin" size={11} />
          <Icon name="closeWin" size={11} />
        </DockTitle>
        <TopTabs>
          <TopTab $active>Model</TopTab>
          <TopTab>Tasks</TopTab>
        </TopTabs>
        <Pane>
          <TreeBox>
            <TreeHead>Labels &amp; Attributes</TreeHead>
            <TreeRoot>Application</TreeRoot>
            <TreeItem depth={0} icon="doc" label="EstantePara" open bold />
            <TreeItem depth={1} icon="space" label="Space" dim />
            <TreeItem depth={1} icon="bodyT" label="Body" open bold current />
            <TreeItem depth={2} icon="origin" label="Origin" closed dim />
            <TreeItem depth={2} icon="base" label="BaseFeature" dim />
            <TreeItem depth={2} icon="topPad" label="TopPad" open dim />
            <TreeItem depth={3} icon="sketchG" label="TopSketch" dim />
            <TreeItem depth={2} icon="sketchR" label="FrontSketch" />
            <TreeItem depth={2} icon="sidePad" label="SidePad" open selected />
            <TreeItem depth={3} icon="sketchG" label="SideSketch" dim />
          </TreeBox>
          <Splitter />
          <PropFrame>
            <PropTable>
              <PropHead>
                <HeadCell>Property</HeadCell>
                <HeadCell>Value</HeadCell>
              </PropHead>
              {PROPS.map(row => (row.group ? (
                <GroupRow key={row.group}>{row.group}</GroupRow>
              ) : (
                <PropRow key={row.name} $alt={row.alt}>
                  <PropGutter $active={row.active} />
                  <PropName $active={row.active}>{row.name}</PropName>
                  <PropValue>{row.value}</PropValue>
                </PropRow>
              )))}
            </PropTable>
          </PropFrame>
          <BottomTabs>
            <BottomTab>View</BottomTab>
            <BottomTab $active>Data</BottomTab>
          </BottomTabs>
        </Pane>
      </Dock>

      <Center>
        <Viewport>
          <BoxScene />
          <NavigationCube />
          <Axes />
        </Viewport>
        <DocTabs>
          <DocTab><Logo /><DocLabel>Start page</DocLabel><Close /></DocTab>
          <DocTab><Logo /><DocLabel>Estante1 : 1*</DocLabel><Close /></DocTab>
          <DocTab $active><Logo /><DocLabel $active>EstantePara : 1*</DocLabel><Close active /></DocTab>
        </DocTabs>
      </Center>
    </Main>

    <StatusBar>
      <StatusText>Valid, Internal name: Sketch001</StatusText>
      <StatusCell $nav>
        <Icon name="mouse" size={22} />
        <CadLabel>CAD</CadLabel>
        <SmallCaret />
      </StatusCell>
      <StatusCell>1956,31 mm x 1267,80 mm</StatusCell>
    </StatusBar>
  </Window>
);

export default App;
